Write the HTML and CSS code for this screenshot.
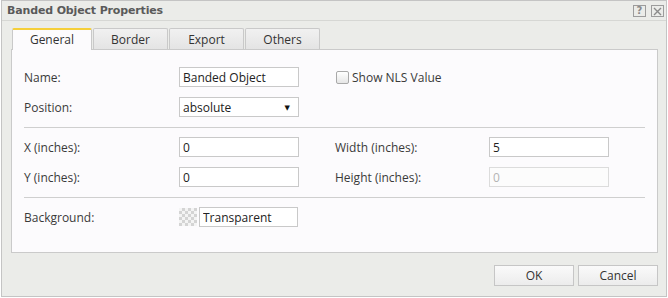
FILE: index.html
```html
<!DOCTYPE html>
<html lang="en">
<head>
  <meta charset="UTF-8" />
  <title>Banded Object Properties</title>
  <link rel="stylesheet" href="styles.css">
</head>
<body>
  <div class="dialog">
    <div class="titlebar">
      <span class="title">Banded Object Properties</span>
      <div class="title-tools">
        <span class="tool-btn">?</span>
        <span class="tool-btn">
          <svg width="9" height="9" viewBox="0 0 9 9"><path d="M1 1L8 8M8 1L1 8" stroke="#8a8a8a" stroke-width="1.4"/></svg>
        </span>
      </div>
    </div>

    <div class="dialog-body">
      <div class="tabs">
        <div class="tab active">General</div>
        <div class="tab">Border</div>
        <div class="tab">Export</div>
        <div class="tab">Others</div>
      </div>

      <div class="panel">
        <div class="row">
          <label class="label">Name:</label>
          <input class="field" type="text" value="Banded Object" />
          <label class="check">
            <span class="checkbox"></span>
            Show NLS Value
          </label>
        </div>
        <div class="row">
          <label class="label">Position:</label>
          <div class="field select">
            <span>absolute</span>
            <span class="arrow">&#9660;</span>
          </div>
        </div>

        <div class="divider"></div>

        <div class="row">
          <label class="label">X (inches):</label>
          <input class="field" type="text" value="0" />
          <label class="label label-right">Width (inches):</label>
          <input class="field" type="text" value="5" />
        </div>
        <div class="row">
          <label class="label">Y (inches):</label>
          <input class="field" type="text" value="0" />
          <label class="label label-right">Height (inches):</label>
          <input class="field" type="text" value="0" disabled />
        </div>

        <div class="divider"></div>

        <div class="row">
          <label class="label">Background:</label>
          <span class="swatch"></span>
          <input class="field color-name" type="text" value="Transparent" />
        </div>
      </div>

      <div class="buttons">
        <button class="btn">OK</button>
        <button class="btn">Cancel</button>
      </div>
    </div>
  </div>
</body>
</html>
```

FILE: styles.css
```css
body {
  margin: 0;
  background: #ffffff;
  font-family: 'Open Sans', 'DejaVu Sans', sans-serif;
  font-size: 12px;
  color: #3a3a3a;
}
.dialog {
  box-sizing: border-box;
  width: 666px;
  height: 297px;
  margin-left: 1px;
  background: #ebece9;
  border: 1px solid #c4c4c4;
}
.titlebar {
  display: flex;
  align-items: center;
  justify-content: space-between;
  height: 19px;
  padding: 0 2px 0 5px;
  border-bottom: 1px solid #d6d7d4;
}
.title {
  font-family: 'DejaVu Sans', sans-serif;
  font-weight: bold;
  font-size: 11px;
  letter-spacing: -0.15px;
  color: #5a5a5a;
}
.title-tools {
  display: flex;
  gap: 5px;
  margin-top: 1px;
}
.tool-btn {
  box-sizing: border-box;
  display: flex;
  align-items: center;
  justify-content: center;
  width: 13px;
  height: 12px;
  border: 1px solid #9c9c9c;
  font-family: 'DejaVu Sans', sans-serif;
  font-size: 10px;
  font-weight: bold;
  color: #8a8a8a;
  line-height: 1;
}
.dialog-body {
  padding: 7px 8px 0 9px;
}
.tabs {
  display: flex;
  gap: 1px;
  padding-left: 1px;
  height: 21px;
}
.tab {
  box-sizing: border-box;
  width: 75px;
  height: 21px;
  padding-top: 2px;
  text-align: center;
  background: linear-gradient(#f1f1f1, #e4e4e4);
  border: 1px solid #c9c9c9;
  border-bottom: none;
  border-radius: 2px 2px 0 0;
  color: #333;
}
.tab.active {
  width: 80px;
  height: 22px;
  background: #fcfbfd;
  border-top: 2px solid #f5cf3a;
  padding-top: 1px;
  position: relative;
  z-index: 1;
}
.panel {
  box-sizing: border-box;
  height: 204px;
  background: #fcfbfd;
  border: 1px solid #cacaca;
  padding: 17px 12px 0 12px;
}
.row {
  display: flex;
  align-items: center;
  height: 20px;
  margin-bottom: 10px;
}
.label {
  width: 155px;
  padding-top: 1px;
}
.label-right {
  width: 154px;
  margin-left: 36px;
}
.field {
  box-sizing: border-box;
  width: 120px;
  height: 20px;
  margin: 0;
  padding: 0 3px;
  border: 1px solid #c9c9c9;
  background: #fff;
  font-family: inherit;
  font-size: 12px;
  color: #222;
  outline: none;
}
.field:disabled {
  border-color: #dcdcdc;
  color: #b4b4b4;
  background: #fcfcfc;
}
.select {
  display: flex;
  align-items: center;
  justify-content: space-between;
  padding-right: 8px;
}
.arrow {
  font-size: 7px;
  color: #111;
}
.check {
  display: flex;
  align-items: center;
  gap: 3px;
  margin-left: 37px;
}
.checkbox {
  box-sizing: border-box;
  width: 13px;
  height: 13px;
  border: 1px solid #a9a9a9;
  border-radius: 2px;
  background: linear-gradient(#ffffff, #e6e6e6);
}
.divider {
  height: 1px;
  background: #cfcfcf;
  margin: 0 0 9px 0;
}
.swatch {
  width: 18px;
  height: 18px;
  margin-right: 2px;
  background-color: #fff;
  background-image: conic-gradient(#d4d4d4 25%, #f4f4f4 0 50%, #d4d4d4 0 75%, #f4f4f4 0);
  background-size: 6px 6px;
}
.color-name {
  width: 99px;
  height: 20px;
}
.buttons {
  display: flex;
  justify-content: flex-end;
  gap: 4px;
  margin-top: 12px;
}
.btn {
  box-sizing: border-box;
  width: 80px;
  height: 21px;
  border: 1px solid #c6c6c6;
  background: linear-gradient(#fafafa, #ececec);
  font-family: inherit;
  font-size: 12px;
  color: #333;
  padding: 0;
}
```
